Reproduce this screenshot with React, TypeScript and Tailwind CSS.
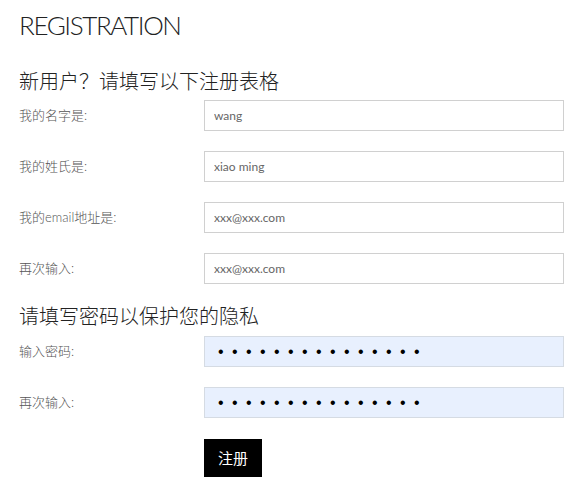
const latin = "font-['Lato','Noto_Sans_CJK_SC',sans-serif]";

interface Field {
  label: string;
  value: string;
}

const profile: Field[] = [
  { label: "我的名字是:", value: "wang" },
  { label: "我的姓氏是:", value: "xiao ming" },
  { label: "我的email地址是:", value: "xxx@xxx.com" },
  { label: "再次输入:", value: "xxx@xxx.com" },
];

const secrets: Field[] = [
  { label: "输入密码:", value: "abcdefghijklmno" },
  { label: "再次输入:", value: "abcdefghijklmno" },
];

function Row({ field, secret }: { field: Field; secret?: boolean }) {
  return (
    <div className="flex items-center">
      <label className="w-[185px] text-[13px] font-light text-[#555] leading-none">{field.label}</label>
      {secret ? (
        <input
          type="password"
          readOnly
          value={field.value}
          className="w-[360px] h-[31px] border border-[#d5dbe3] bg-[#e8f0fe] pl-[13px] text-[16px] tracking-[8.4px] text-black outline-none font-['Liberation_Sans',sans-serif]"
        />
      ) : (
        <input
          type="text"
          readOnly
          value={field.value}
          className="w-[360px] h-[31px] border border-[#d0d0d0] bg-white pl-[9px] text-[12px] text-[#666] outline-none"
        />
      )}
    </div>
  );
}

export default function App() {
  return (
    <div className={`w-[586px] h-[495px] bg-white pl-[19px] pt-[9px] ${latin}`}>
      <h1 className="text-[26px] leading-[32px] font-light text-[#222] tracking-[-1.4px]">REGISTRATION</h1>

      <h2 className="mt-[26px] mb-[5px] text-[20px] leading-[28px] font-light text-[#222]">新用户？请填写以下注册表格</h2>
      <div className="flex flex-col gap-[20px]">
        {profile.map((f, i) => (
          <Row field={f} key={i} />
        ))}
      </div>

      <h2 className="mt-[18px] mb-[6px] text-[20px] leading-[28px] font-light text-[#222]">请填写密码以保护您的隐私</h2>
      <div className="flex flex-col gap-[20px]">
        {secrets.map((f, i) => (
          <Row field={f} key={i} secret />
        ))}
      </div>

      <div className="pl-[185px] mt-[21px]">
        <button className="w-[58px] h-[38px] bg-black text-white text-[15px]">注册</button>
      </div>
    </div>
  );
}
